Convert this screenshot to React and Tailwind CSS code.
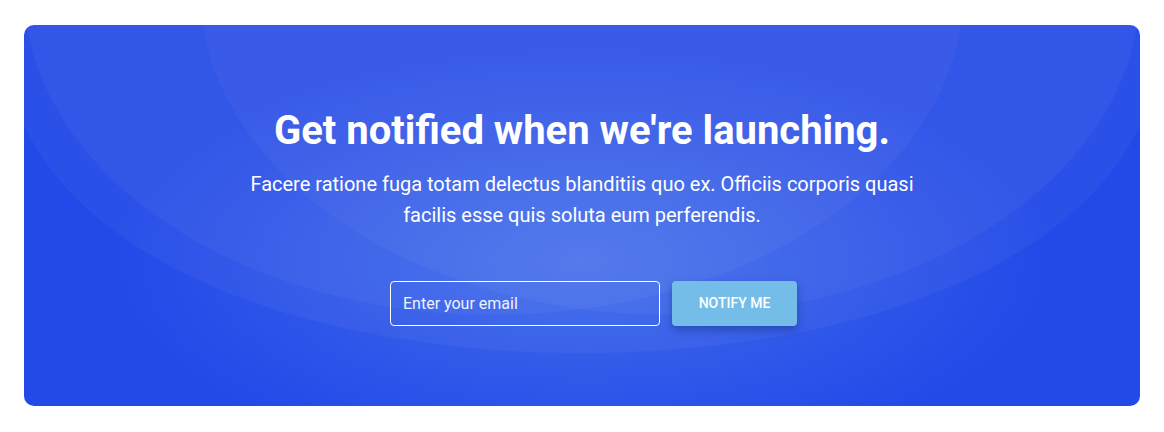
const Backdrop = () => (
    <svg
        className="absolute inset-0 h-full w-full"
        viewBox="0 0 1116 381"
        preserveAspectRatio="none"
        fill="none"
    >
        {/* large arc */}
        <path d="M0 100 C66 245 296 328 558 328 C820 328 1050 245 1116 100 L1116 0 L0 0 Z" fill="#ffffff" fillOpacity="0.04" />
        {/* two overlapping ellipses */}
        <ellipse cx="646" cy="-35" rx="470" ry="325" fill="#ffffff" fillOpacity="0.035" />
        <ellipse cx="470" cy="-35" rx="470" ry="325" fill="#ffffff" fillOpacity="0.035" />
    </svg>
);

export default function App() {
    return (
        <div className="min-h-screen bg-white px-6 pt-[25px]" style={{ fontFamily: 'Roboto, "Noto Sans", sans-serif' }}>
            <div className="relative overflow-hidden rounded-[10px] bg-[#2349e8] h-[381px]">
                <div className="absolute inset-0 bg-[radial-gradient(ellipse_42%_55%_at_50%_62%,rgba(110,160,240,0.4),rgba(110,160,240,0))]"></div>
                <Backdrop />

                <div className="relative flex flex-col items-center pt-[82px] text-center">
                    <h2 className="text-[40px] font-bold leading-[48px] text-white">
                        Get notified when we're launching.
                    </h2>
                    <p className="mt-[14px] max-w-[672px] text-[20px] leading-[31px] text-white">
                        Facere ratione fuga totam delectus blanditiis quo ex. Officiis corporis quasi facilis esse quis soluta eum perferendis.
                    </p>

                    <form className="mt-[50px] ml-[23px] flex gap-3" onSubmit={(e) => e.preventDefault()}>
                        <input
                            type="email"
                            placeholder="Enter your email"
                            className="h-[45px] w-[270px] rounded-[4px] border border-white bg-transparent px-3 text-[16px] text-white placeholder:text-[#eef2ff] focus:outline-none"
                        />
                        <button
                            type="submit"
                            className="h-[45px] w-[125px] rounded-[4px] bg-[#75bde9] text-[14px] font-medium uppercase text-white shadow-[0_4px_8px_rgba(10,30,90,0.35)]"
                        >
                            Notify me
                        </button>
                    </form>
                </div>
            </div>
        </div>
    );
}
